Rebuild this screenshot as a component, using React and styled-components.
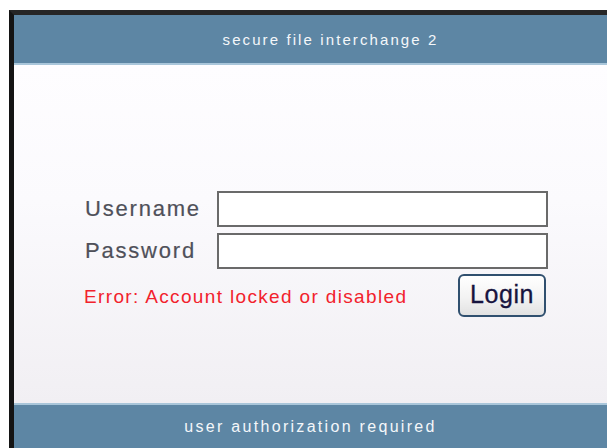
import React from 'react';
import styled, { createGlobalStyle } from 'styled-components';

const GlobalStyle = createGlobalStyle`
  html, body {
    margin: 0;
    padding: 0;
    background: #ffffff;
    overflow: hidden;
  }
`;

const Frame = styled.div`
  margin: 10px 0 0 9px;
  height: 438px;
  display: flex;
  flex-direction: column;
  border-left: 5px solid #141414;
  border-top: 5px solid #262626;
  box-sizing: border-box;
`;

const Bar = styled.div`
  height: ${p => p.$height}px;
  flex: none;
  display: flex;
  align-items: center;
  justify-content: center;
  padding-left: ${p => p.$shift}px;
  background: #5d86a4;
  color: #f4f7fa;
  font-family: "Liberation Sans", Arial, sans-serif;
  font-size: ${p => p.$size}px;
  letter-spacing: ${p => p.$spacing}px;
  border-${p => p.$edge}: 2px solid #a9c6da;
`;

const Body = styled.div`
  flex: 1;
  background: linear-gradient(180deg, #fefdff 0%, #fbfafd 40%, #f1eff3 100%);
  padding: 126px 0 0 71px;
`;

const Form = styled.form`
  display: grid;
  grid-template-columns: 132px 331px;
  row-gap: 6px;
  align-items: center;
  font-family: "Liberation Sans", Arial, sans-serif;
`;

const Label = styled.label`
  font-size: 22px;
  letter-spacing: 1.8px;
  color: #4f5059;
  -webkit-text-stroke: 0.2px #4f5059;
`;

const Field = styled.input`
  height: 36px;
  box-sizing: border-box;
  border: 2px solid #6a6a6a;
  background: #ffffff;
  margin: 0;
  padding: 2px 6px;
  font-size: 18px;
  outline: none;
`;

const Actions = styled.div`
  grid-column: 1 / 3;
  display: flex;
  align-items: center;
  justify-content: space-between;
  padding-right: 2px;
  margin-top: -1px;
`;

const ErrorText = styled.span`
  font-size: 19px;
  letter-spacing: 1.35px;
  color: #f2222c;
  margin-left: -1px;
  margin-top: 2px;
`;

const LoginButton = styled.button`
  width: 88px;
  height: 43px;
  box-sizing: border-box;
  border: 2px solid #30506f;
  border-radius: 6px;
  background: linear-gradient(180deg, #ffffff 0%, #f3f3f3 55%, #e2e2e2 100%);
  font-family: "Liberation Sans", Arial, sans-serif;
  font-size: 25px;
  letter-spacing: 0.6px;
  color: #17143f;
  -webkit-text-stroke: 0.3px #17143f;
  padding: 0 0 2px 0;
  cursor: pointer;
`;

export default function App() {
  return (
    <>
      <GlobalStyle />
      <Frame>
        <Bar $height={48} $size={15} $spacing={2.1} $shift={40} $edge="bottom">
          secure file interchange 2
        </Bar>
        <Body>
          <Form onSubmit={e => e.preventDefault()}>
            <Label htmlFor="username">Username</Label>
            <Field id="username" type="text" />
            <Label htmlFor="password">Password</Label>
            <Field id="password" type="password" />
            <Actions>
              <ErrorText>Error: Account locked or disabled</ErrorText>
              <LoginButton type="submit">Login</LoginButton>
            </Actions>
          </Form>
        </Body>
        <Bar $height={43} $size={16} $spacing={2.3} $shift={0} $edge="top">
          user authorization required
        </Bar>
      </Frame>
    </>
  );
}
